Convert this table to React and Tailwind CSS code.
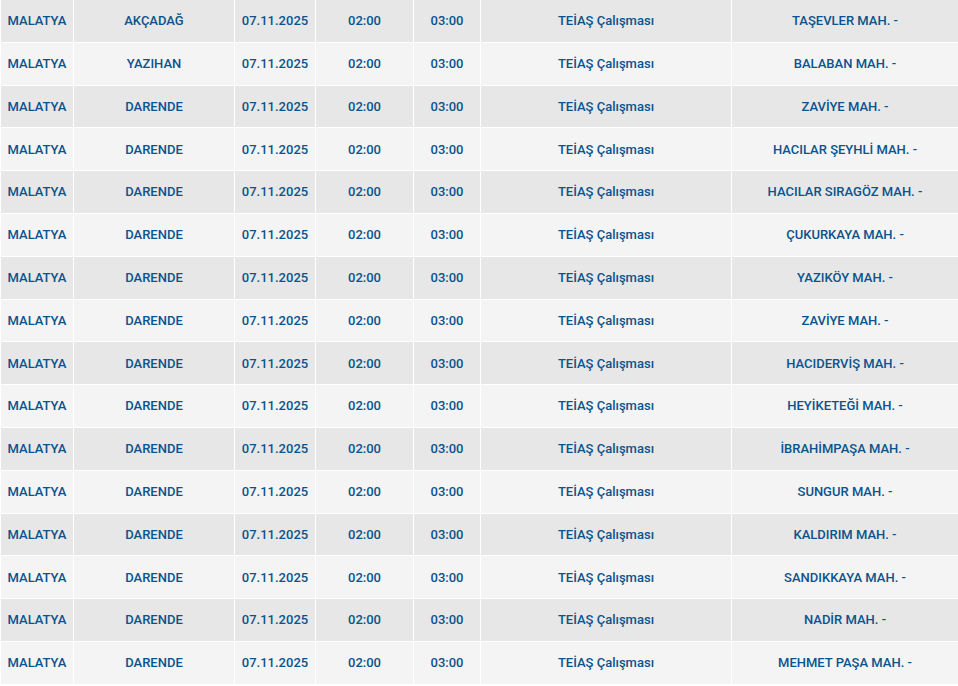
import React from 'react';

const rows = [
  ['AKÇADAĞ', 'TAŞEVLER MAH. -'],
  ['YAZIHAN', 'BALABAN MAH. -'],
  ['DARENDE', 'ZAVİYE MAH. -'],
  ['DARENDE', 'HACILAR ŞEYHLİ MAH. -'],
  ['DARENDE', 'HACILAR SIRAGÖZ MAH. -'],
  ['DARENDE', 'ÇUKURKAYA MAH. -'],
  ['DARENDE', 'YAZIKÖY MAH. -'],
  ['DARENDE', 'ZAVİYE MAH. -'],
  ['DARENDE', 'HACIDERVİŞ MAH. -'],
  ['DARENDE', 'HEYİKETEĞİ MAH. -'],
  ['DARENDE', 'İBRAHİMPAŞA MAH. -'],
  ['DARENDE', 'SUNGUR MAH. -'],
  ['DARENDE', 'KALDIRIM MAH. -'],
  ['DARENDE', 'SANDIKKAYA MAH. -'],
  ['DARENDE', 'NADİR MAH. -'],
  ['DARENDE', 'MEHMET PAŞA MAH. -'],
];

const widths = [73, 161, 81, 98, 67, 251, 227];

export default function App() {
  return (
    <div className="w-[958px] h-[686px] overflow-hidden bg-white" style={{ fontFamily: 'Roboto, "Liberation Sans", sans-serif' }}>
      <table className="w-[958px] table-fixed border-collapse -mt-[1px]">
        <colgroup>
          {widths.map((w, i) => (
            <col key={i} style={{ width: w }} />
          ))}
        </colgroup>
        <tbody>
          {rows.map(([ilce, mahalle], i) => (
            <tr key={i} className={i % 2 === 0 ? 'bg-[#e7e7e7]' : 'bg-[#f4f4f4]'}>
              {['MALATYA', ilce, '07.11.2025', '02:00', '03:00', 'TEİAŞ Çalışması', mahalle].map((cell, j) => (
                <td
                  key={j}
                  className="h-[42.8px] border border-white text-center text-[13px] font-medium text-[#0a538c] p-0 whitespace-nowrap"
                >
                  {cell}
                </td>
              ))}
            </tr>
          ))}
        </tbody>
      </table>
    </div>
  );
}
